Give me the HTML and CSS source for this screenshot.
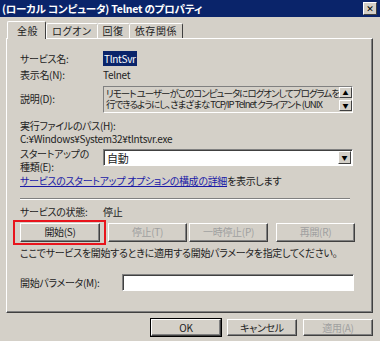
FILE: index.html
```html
<!DOCTYPE html>
<html lang="ja">
<head>
    <meta charset="UTF-8">
    <title>Telnet のプロパティ</title>
    <link rel="stylesheet" href="styles.css">
</head>
<body>
    <div class="dialog">
        <div class="titlebar">
            <span class="title">(ローカル コンピュータ) Telnet のプロパティ</span>
            <span class="close-btn">✕</span>
        </div>

        <div class="tabs">
            <div class="tab active">全般</div>
            <div class="tab">ログオン</div>
            <div class="tab">回復</div>
            <div class="tab">依存関係</div>
        </div>

        <div class="panel">
            <div class="row r-name">
                <span class="label">サービス名:</span>
                <span class="value"><span class="selected">TlntSvr</span></span>
            </div>
            <div class="row r-disp">
                <span class="label">表示名(N):</span>
                <span class="value">Telnet</span>
            </div>
            <div class="row r-desc">
                <span class="label">説明(D):</span>
                <div class="textbox">
                    <div class="textbox-text">
                        <div>リモート ユーザーがこのコンピュータにログオンしてプログラムを実</div>
                        <div>行できるようにし、さまざまな TCP/IP Telnet クライアント (UNIX</div>
                    </div>
                    <div class="scroll">
                        <span class="arrow">▲</span>
                        <span class="arrow">▼</span>
                    </div>
                </div>
            </div>
            <div class="path-label">実行ファイルのパス(H):</div>
            <div class="path">C:¥Windows¥System32¥tlntsvr.exe</div>
            <div class="row r-start">
                <span class="label two-line"><span>スタートアップの</span><span>種類(E):</span></span>
                <div class="select">
                    <span class="select-text">自動</span>
                    <span class="drop">▼</span>
                </div>
            </div>
            <div class="link-row"><a class="link">サービスのスタートアップ オプションの構成の詳細</a>を表示します</div>
            <div class="separator"></div>
            <div class="row r-state">
                <span class="label">サービスの状態:</span>
                <span class="value">停止</span>
            </div>
            <div class="btn-row">
                <div class="highlight"><button class="btn">開始(S)</button></div>
                <button class="btn disabled">停止(T)</button>
                <button class="btn disabled">一時停止(P)</button>
                <button class="btn disabled">再開(R)</button>
            </div>
            <div class="note">ここでサービスを開始するときに適用する開始パラメータを指定してください。</div>
            <div class="row r-param">
                <span class="label">開始パラメータ(M):</span>
                <div class="input"></div>
            </div>
        </div>

        <div class="footer">
            <button class="btn foot default">OK</button>
            <button class="btn foot">キャンセル</button>
            <button class="btn foot disabled">適用(A)</button>
        </div>
    </div>
</body>
</html>
```

FILE: styles.css
```css
body {
    margin: 0;
    padding: 0;
    background-color: #d4d0c8;
    font-family: "Noto Sans CJK JP", "DejaVu Sans", sans-serif;
    font-size: 10px;
    font-feature-settings: "palt";
    letter-spacing: -0.3px;
    color: #222;
}
.dialog {
    width: 380px;
    height: 341px;
    background-color: #d4d0c8;
    overflow: hidden;
}
.titlebar {
    height: 17px;
    background-color: #0a246a;
    display: flex;
    align-items: center;
    justify-content: space-between;
    padding: 0 3px 0 2px;
}
.title {
    color: #fff;
    font-weight: bold;
    font-size: 10.5px;
    letter-spacing: -0.2px;
}
.close-btn {
    width: 12px;
    height: 11px;
    background-color: #d4d0c8;
    border: 1px solid;
    border-color: #fff #404040 #404040 #fff;
    color: #000;
    font-size: 9px;
    font-weight: bold;
    line-height: 11px;
    text-align: center;
    letter-spacing: 0;
}

/* tabs */
.tabs {
    display: flex;
    align-items: flex-end;
    height: 18px;
    margin-top: 3px;
    padding-left: 9px;
}
.tab {
    height: 14px;
    line-height: 14px;
    padding: 0 5px;
    border: 1px solid;
    border-color: #fff #404040 transparent #fff;
    border-bottom: none;
    border-radius: 2px 2px 0 0;
    margin-right: -1px;
    letter-spacing: 0.6px;
}
.tab.active {
    height: 17px;
    line-height: 17px;
    padding: 0 7px 0 9px;
    margin-left: -2px;
    margin-right: 0;
    position: relative;
    z-index: 1;
    background-color: #d4d0c8;
    margin-bottom: -1px;
}

/* panel */
.panel {
    margin: 0 7px 0 6px;
    height: 275px;
    box-sizing: border-box;
    border: 1px solid;
    border-color: #fff #404040 #404040 #fff;
    box-shadow: inset -1px -1px 0 #808080;
    padding: 11px 0 0 13px;
}
.row {
    display: flex;
    align-items: center;
}
.label {
    width: 83px;
    flex: none;
}
.selected {
    background-color: #0a246a;
    color: #fff;
    padding: 0 1px;
}
.r-name { height: 16px; }
.r-disp { height: 16px; }
.r-desc {
    height: 27px;
    margin-top: 4px;
    align-items: flex-start;
}
.r-desc .label { padding-top: 5px; }
.textbox {
    width: 250px;
    height: 27px;
    box-sizing: border-box;
    border: 1px solid;
    border-color: #808080 #fff #fff #808080;
    display: flex;
    background-color: #d4d0c8;
}
.textbox-text {
    flex: 1;
    min-width: 0;
    overflow: hidden;
    font-size: 9.5px;
    line-height: 11px;
    padding: 1px 0 0 2px;
    white-space: nowrap;
    letter-spacing: -1px;
}
.scroll {
    width: 13px;
    flex: none;
    display: flex;
    flex-direction: column;
}
.arrow {
    height: 11px;
    box-sizing: border-box;
    border: 1px solid;
    border-color: #fff #404040 #404040 #fff;
    background-color: #d4d0c8;
    font-size: 6px;
    line-height: 9px;
    text-align: center;
    color: #000;
    margin-bottom: 2px;
    letter-spacing: 0;
}
.path-label {
    margin-top: 6px;
    height: 13px;
    line-height: 13px;
}
.path {
    height: 13px;
    line-height: 13px;
}
.r-start {
    margin-top: 2px;
    height: 27px;
    align-items: flex-start;
}
.two-line {
    display: flex;
    flex-direction: column;
    line-height: 13px;
}
.select {
    width: 250px;
    height: 17px;
    margin-top: 2px;
    box-sizing: border-box;
    border: 1px solid;
    border-color: #808080 #fff #fff #808080;
    box-shadow: inset 1px 1px 0 #404040;
    background-color: #fff;
    display: flex;
    align-items: center;
    justify-content: space-between;
}
.select-text {
    padding-left: 3px;
    font-size: 11px;
}
.drop {
    width: 13px;
    height: 13px;
    box-sizing: border-box;
    border: 1px solid;
    border-color: #fff #404040 #404040 #fff;
    background-color: #d4d0c8;
    font-size: 6px;
    line-height: 11px;
    text-align: center;
    color: #000;
    margin-right: 1px;
    letter-spacing: 0;
}
.link-row {
    height: 14px;
    line-height: 14px;
}
.link {
    color: #1a1aa6;
    text-decoration: underline;
}
.separator {
    width: 330px;
    height: 0;
    border-top: 1px solid #808080;
    border-bottom: 1px solid #fff;
    margin-top: 10px;
}
.r-state {
    height: 16px;
    margin-top: 3px;
}
.btn-row {
    display: flex;
    align-items: center;
    height: 26px;
    margin-left: -7px;
}
.highlight {
    border: 2px solid #e8141c;
    padding: 1px 4px 1px 5px;
}
.btn {
    width: 80px;
    height: 19px;
    box-sizing: border-box;
    border: 1px solid;
    border-color: #fff #404040 #404040 #fff;
    box-shadow: inset -1px -1px 0 #808080;
    background-color: #d4d0c8;
    font-family: inherit;
    font-size: 10px;
    font-feature-settings: "palt";
    letter-spacing: -0.3px;
    color: #222;
    padding: 0;
    line-height: 16px;
}
.btn-row .btn.disabled {
    margin-left: 2px;
    width: 79px;
}
.btn-row .btn.disabled:last-child {
    margin-left: 8px;
}
.btn.disabled {
    color: #a0a0a0;
}
.note {
    margin-top: 1px;
    height: 14px;
    line-height: 14px;
}
.r-param {
    margin-top: 13px;
    height: 18px;
}
.r-param .label {
    width: 102px;
}
.input {
    width: 232px;
    height: 17px;
    box-sizing: border-box;
    border: 1px solid;
    border-color: #808080 #fff #fff #808080;
    box-shadow: inset 1px 1px 0 #404040;
    background-color: #fff;
}

/* bottom buttons */
.footer {
    display: flex;
    justify-content: flex-end;
    gap: 6px;
    padding: 6px 7px 0 0;
}
.btn.foot {
    width: 70px;
    height: 17px;
    line-height: 14px;
}
.btn.foot.default {
    outline: 1px solid #000;
}
```
